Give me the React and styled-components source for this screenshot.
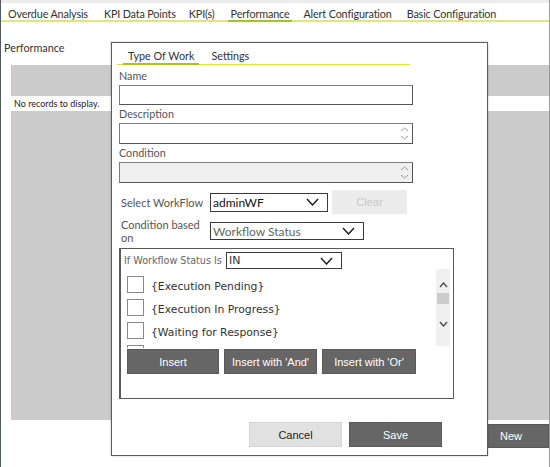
import React from 'react';
import styled, { createGlobalStyle } from 'styled-components';

const Global = createGlobalStyle`
  html, body { margin: 0; padding: 0; background: #fff; }
  body { font-family: "Segoe UI", Lato, "Noto Sans", sans-serif; }
  * { box-sizing: border-box; }
`;

const Page = styled.div`
  position: relative;
  width: 550px;
  height: 467px;
  overflow: hidden;
  background: #fff;
  border-left: 1px solid #4d5966;
  border-right: 1px solid #9a9a9a;
  display: flex;
  flex-direction: column;
`;

const TopStrip = styled.div`
  height: 3px;
  background: #ececec;
`;

const TabBar = styled.div`
  display: flex;
  height: 19px;
  padding-left: 4px;
  border-bottom: 2px solid #dfe67c;
`;

const Tab = styled.div`
  font-size: 10.8px;
  letter-spacing: -0.15px;
  line-height: 15px;
  padding: 3px 3px 0;
  margin-right: ${p => p.$gap}px;
  color: #333;
  border-bottom: 2px solid ${p => (p.$active ? '#a5c324' : 'transparent')};
  height: 19px;
  white-space: nowrap;
`;

const PageTitle = styled.div`
  font-size: 10.8px;
  color: #333;
  padding-left: 3px;
  margin-top: 18px;
  line-height: 16px;
`;

const Grid = styled.div`
  margin: 9px 0 0 10px;
  display: flex;
  flex-direction: column;
`;

const GridHeader = styled.div`
  height: 31px;
  background: #cbcbcb;
`;

const NoRecords = styled.div`
  height: 15px;
  font-size: 9px;
  line-height: 15px;
  padding-left: 3px;
  color: #222;
`;

const GridBody = styled.div`
  height: 309px;
  background: #cbcbcb;
`;

const GridFooter = styled.div`
  display: flex;
  justify-content: flex-end;
  margin-top: 4px;
`;

const DarkButton = styled.button`
  width: ${p => p.$w || 93}px;
  height: ${p => p.$h || 25}px;
  background: #666;
  border: 1px solid #5a5a5a;
  color: #fff;
  font-family: "Liberation Sans", Arial, sans-serif;
  font-size: 11px;
  padding: 0;
  text-align: ${p => p.$align || 'center'};
  padding-left: ${p => p.$pl || 0}px;
  white-space: nowrap;
`;

const LightButton = styled.button`
  width: ${p => p.$w || 93}px;
  height: ${p => p.$h || 25}px;
  background: ${p => (p.$disabled ? '#ececec' : '#e1e1e1')};
  border: 1px solid ${p => (p.$disabled ? '#ececec' : '#d6d6d6')};
  color: ${p => (p.$disabled ? '#c9c9c9' : '#222')};
  font-family: "Liberation Sans", Arial, sans-serif;
  font-size: 11px;
  padding: 0;
  margin-left: ${p => p.$ml || 0}px;
`;

const Modal = styled.div`
  position: absolute;
  left: 110px;
  top: 42px;
  width: 377px;
  height: 414px;
  background: #fff;
  border: 1px solid #5c5c5c;
  box-shadow: 0 0 2px rgba(0, 0, 0, 0.25);
  display: flex;
  flex-direction: column;
`;

const ModalTabs = styled.div`
  display: flex;
  gap: 7px;
  margin-left: 5px;
  width: 293px;
  padding: 7px 0 0 6px;
  border-bottom: 1px solid #dbe23f;
`;

const ModalTab = styled.div`
  font-size: 10.8px;
  line-height: 12px;
  padding: 0 5px;
  height: 13px;
  margin-bottom: -1px;
  color: #333;
  border-bottom: 2px solid ${p => (p.$active ? '#a5c324' : 'transparent')};
  box-sizing: content-box;
`;

const Form = styled.div`
  padding-left: 7px;
  display: flex;
  flex-direction: column;
`;

const FieldLabel = styled.div`
  font-size: 10.8px;
  line-height: 14px;
  color: #555;
  margin: ${p => p.$mt ?? 2}px 0 2px;
`;

const TextInput = styled.div`
  width: 294px;
  height: ${p => p.$h || 20}px;
  border: 1px solid #7d7d7d;
  border-bottom-color: #555;
  border-right-color: #555;
  background: ${p => (p.$disabled ? '#f0f0f0' : '#fff')};
  display: flex;
  justify-content: flex-end;
  align-items: center;
  padding-right: 3px;
`;

const Spin = styled.div`
  display: flex;
  flex-direction: column;
  gap: 3px;
`;

const Row = styled.div`
  display: flex;
  align-items: center;
  margin-top: ${p => p.$mt || 0}px;
`;

const RowLabel = styled.div`
  width: 91px;
  padding-left: 2px;
  font-size: 11px;
  line-height: 13px;
  color: #555;
`;

const Select = styled.div`
  width: ${p => p.$w}px;
  height: ${p => p.$h || 19}px;
  border: 1px solid #3a3a3a;
  background: #fff;
  display: flex;
  align-items: center;
  justify-content: space-between;
  padding: 0 ${p => p.$pr || 8}px 0 2px;
  font-size: ${p => p.$fs || 12}px;
  color: ${p => p.$color || '#111'};
  font-family: ${p => (p.$verdana ? '"DejaVu Sans", Verdana, sans-serif' : 'inherit')};
`;

const InnerBox = styled.div`
  width: 335px;
  height: 151px;
  margin-top: 4px;
  border: 1px solid #5a5a5a;
  border-left: 2px solid #5a5a5a;
  display: flex;
  flex-direction: column;
  padding: 3px 0 0 0;
`;

const FilterRow = styled.div`
  display: flex;
  align-items: center;
  padding-left: 3px;
`;

const FilterLabel = styled.div`
  font-family: "DejaVu Sans", Verdana, sans-serif;
  font-size: 9.6px;
  color: #666;
  white-space: nowrap;
  width: 102px;
`;

const ListArea = styled.div`
  display: flex;
  height: 79px;
  overflow: hidden;
`;

const List = styled.div`
  flex: 1;
  padding: 6px 0 0 6px;
`;

const Item = styled.div`
  height: 23px;
  display: flex;
  align-items: flex-start;
  gap: 7px;
`;

const Check = styled.div`
  width: 17px;
  height: 17px;
  margin-top: 1px;
  border: 1px solid #8a8a8a;
  background: #fff;
  flex: none;
`;

const ItemText = styled.div`
  font-family: "DejaVu Sans", Verdana, sans-serif;
  font-size: 10.8px;
  line-height: 24px;
  color: #333;
  white-space: nowrap;
`;

const Scrollbar = styled.div`
  width: 14px;
  margin-right: 3px;
  height: 77px;
  background: #f0f0f0;
  display: flex;
  flex-direction: column;
  align-items: center;
  padding-top: 13px;
`;

const Thumb = styled.div`
  width: 12px;
  height: 11px;
  background: #cdcdcd;
  margin: 5px 0 17px;
`;

const ButtonRow = styled.div`
  display: flex;
  margin-left: 6px;
  margin-top: 1px;
  gap: 5px;
`;

const Footer = styled.div`
  display: flex;
  gap: 7px;
  margin: 23px 0 0 130px;
`;

const Chevron = ({ dir = 'down', w = 12, h = 7, color = '#333', sw = 1.5 }) => (
  <svg width={w} height={h} viewBox={`0 0 ${w} ${h}`} style={{ display: 'block' }}>
    <polyline
      points={
        dir === 'down'
          ? `1,1 ${w / 2},${h - 1} ${w - 1},1`
          : `1,${h - 1} ${w / 2},1 ${w - 1},${h - 1}`
      }
      fill="none"
      stroke={color}
      strokeWidth={sw}
    />
  </svg>
);

const tabs = [
  ['Overdue Analysis', 10],
  ['KPI Data Points', 7],
  ['KPI(s)', 10],
  ['Performance', 8],
  ['Alert Configuration', 9],
  ['Basic Configuration', 0],
];

const items = ['{Execution Pending}', '{Execution In Progress}', '{Waiting for Response}', ''];

export default function App() {
  return (
    <>
      <Global />
      <Page>
        <TopStrip />
        <TabBar>
          {tabs.map(([t, g]) => (
            <Tab key={t} $gap={g} $active={t === 'Performance'}>{t}</Tab>
          ))}
        </TabBar>
        <PageTitle>Performance</PageTitle>
        <Grid>
          <GridHeader />
          <NoRecords>No records to display.</NoRecords>
          <GridBody />
          <GridFooter>
            <DarkButton $w={62} $h={24} $align="left" $pl={12}>New</DarkButton>
          </GridFooter>
        </Grid>

        <Modal>
          <ModalTabs>
            <ModalTab $active>Type Of Work</ModalTab>
            <ModalTab>Settings</ModalTab>
          </ModalTabs>
          <Form>
            <FieldLabel $mt={4}>Name</FieldLabel>
            <TextInput />
            <FieldLabel>Description</FieldLabel>
            <TextInput $h={21}>
              <Spin>
                <Chevron dir="up" w={9} h={5} color="#999" sw={1} />
                <Chevron dir="down" w={9} h={5} color="#999" sw={1} />
              </Spin>
            </TextInput>
            <FieldLabel>Condition</FieldLabel>
            <TextInput $h={21} $disabled>
              <Spin>
                <Chevron dir="up" w={9} h={5} color="#999" sw={1} />
                <Chevron dir="down" w={9} h={5} color="#999" sw={1} />
              </Spin>
            </TextInput>

            <Row $mt={7}>
              <RowLabel>Select WorkFlow</RowLabel>
              <Select $w={118}>
                <span>adminWF</span>
                <Chevron w={13} h={8} color="#222" />
              </Select>
              <LightButton $w={75} $h={24} $disabled $ml={4}>Clear</LightButton>
            </Row>

            <Row $mt={4}>
              <RowLabel>Condition based on</RowLabel>
              <Select $w={154} $h={18} $color="#666">
                <span>Workflow Status</span>
                <Chevron w={13} h={8} color="#222" />
              </Select>
            </Row>

            <InnerBox>
              <FilterRow>
                <FilterLabel>If Workflow Status Is</FilterLabel>
                <Select $w={116} $h={17} $fs={11} $color="#333" $verdana>
                  <span>IN</span>
                  <Chevron w={13} h={8} color="#222" />
                </Select>
              </FilterRow>
              <ListArea>
                <List>
                  {items.map((t, i) => (
                    <Item key={i}>
                      <Check />
                      {t && <ItemText>{t}</ItemText>}
                    </Item>
                  ))}
                </List>
                <Scrollbar>
                  <Chevron dir="up" w={9} h={6} color="#555" sw={1.5} />
                  <Thumb />
                  <Chevron dir="down" w={9} h={6} color="#555" sw={1.5} />
                </Scrollbar>
              </ListArea>
              <ButtonRow>
                <DarkButton $w={92}>Insert</DarkButton>
                <DarkButton $w={93}>Insert with 'And'</DarkButton>
                <DarkButton $w={94}>Insert with 'Or'</DarkButton>
              </ButtonRow>
            </InnerBox>

            <Footer>
              <LightButton $w={93}>Cancel</LightButton>
              <DarkButton $w={93}>Save</DarkButton>
            </Footer>
          </Form>
        </Modal>
      </Page>
    </>
  );
}
